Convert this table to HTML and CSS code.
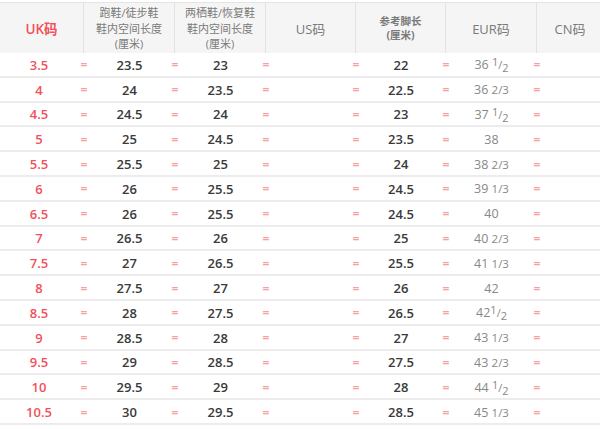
FILE: index.html
```html
<!DOCTYPE html>
<html lang="zh-CN">
<head>
<meta charset="utf-8">
<title>尺码对照表</title>
<link rel="stylesheet" href="styles.css">
</head>
<body>
<div class="sheet">
  <div class="head">
    <div class="hc uk">UK码</div>
    <div class="hc small">跑鞋/徒步鞋<br>鞋内空间长度<br>(厘米)</div>
    <div class="hc small">两栖鞋/恢复鞋<br>鞋内空间长度<br>(厘米)</div>
    <div class="hc">US码</div>
    <div class="hc tiny">参考脚长<br>(厘米)</div>
    <div class="hc">EUR码</div>
    <div class="hc last">CN码</div>
  </div>
  <div class="body">
    <div class="row"><span class="uk">3.5</span><span class="eq">=</span><span class="v">23.5</span><span class="eq">=</span><span class="v">23</span><span class="eq">=</span><span></span><span class="eq">=</span><span class="v">22</span><span class="eq">=</span><span class="eur">36 <span class="fr"><sup>1</sup>/<sub>2</sub></span></span><span class="eq">=</span><span></span></div>
    <div class="row"><span class="uk">4</span><span class="eq">=</span><span class="v">24</span><span class="eq">=</span><span class="v">23.5</span><span class="eq">=</span><span></span><span class="eq">=</span><span class="v">22.5</span><span class="eq">=</span><span class="eur">36 <span class="th">2/3</span></span><span class="eq">=</span><span></span></div>
    <div class="row"><span class="uk">4.5</span><span class="eq">=</span><span class="v">24.5</span><span class="eq">=</span><span class="v">24</span><span class="eq">=</span><span></span><span class="eq">=</span><span class="v">23</span><span class="eq">=</span><span class="eur">37 <span class="fr"><sup>1</sup>/<sub>2</sub></span></span><span class="eq">=</span><span></span></div>
    <div class="row"><span class="uk">5</span><span class="eq">=</span><span class="v">25</span><span class="eq">=</span><span class="v">24.5</span><span class="eq">=</span><span></span><span class="eq">=</span><span class="v">23.5</span><span class="eq">=</span><span class="eur">38</span><span class="eq">=</span><span></span></div>
    <div class="row"><span class="uk">5.5</span><span class="eq">=</span><span class="v">25.5</span><span class="eq">=</span><span class="v">25</span><span class="eq">=</span><span></span><span class="eq">=</span><span class="v">24</span><span class="eq">=</span><span class="eur">38 <span class="th">2/3</span></span><span class="eq">=</span><span></span></div>
    <div class="row"><span class="uk">6</span><span class="eq">=</span><span class="v">26</span><span class="eq">=</span><span class="v">25.5</span><span class="eq">=</span><span></span><span class="eq">=</span><span class="v">24.5</span><span class="eq">=</span><span class="eur">39 <span class="th">1/3</span></span><span class="eq">=</span><span></span></div>
    <div class="row"><span class="uk">6.5</span><span class="eq">=</span><span class="v">26</span><span class="eq">=</span><span class="v">25.5</span><span class="eq">=</span><span></span><span class="eq">=</span><span class="v">24.5</span><span class="eq">=</span><span class="eur">40</span><span class="eq">=</span><span></span></div>
    <div class="row"><span class="uk">7</span><span class="eq">=</span><span class="v">26.5</span><span class="eq">=</span><span class="v">26</span><span class="eq">=</span><span></span><span class="eq">=</span><span class="v">25</span><span class="eq">=</span><span class="eur">40 <span class="th">2/3</span></span><span class="eq">=</span><span></span></div>
    <div class="row"><span class="uk">7.5</span><span class="eq">=</span><span class="v">27</span><span class="eq">=</span><span class="v">26.5</span><span class="eq">=</span><span></span><span class="eq">=</span><span class="v">25.5</span><span class="eq">=</span><span class="eur">41 <span class="th">1/3</span></span><span class="eq">=</span><span></span></div>
    <div class="row"><span class="uk">8</span><span class="eq">=</span><span class="v">27.5</span><span class="eq">=</span><span class="v">27</span><span class="eq">=</span><span></span><span class="eq">=</span><span class="v">26</span><span class="eq">=</span><span class="eur">42</span><span class="eq">=</span><span></span></div>
    <div class="row"><span class="uk">8.5</span><span class="eq">=</span><span class="v">28</span><span class="eq">=</span><span class="v">27.5</span><span class="eq">=</span><span></span><span class="eq">=</span><span class="v">26.5</span><span class="eq">=</span><span class="eur">42<span class="fr"><sup>1</sup>/<sub>2</sub></span></span><span class="eq">=</span><span></span></div>
    <div class="row"><span class="uk">9</span><span class="eq">=</span><span class="v">28.5</span><span class="eq">=</span><span class="v">28</span><span class="eq">=</span><span></span><span class="eq">=</span><span class="v">27</span><span class="eq">=</span><span class="eur">43 <span class="th">1/3</span></span><span class="eq">=</span><span></span></div>
    <div class="row"><span class="uk">9.5</span><span class="eq">=</span><span class="v">29</span><span class="eq">=</span><span class="v">28.5</span><span class="eq">=</span><span></span><span class="eq">=</span><span class="v">27.5</span><span class="eq">=</span><span class="eur">43 <span class="th">2/3</span></span><span class="eq">=</span><span></span></div>
    <div class="row"><span class="uk">10</span><span class="eq">=</span><span class="v">29.5</span><span class="eq">=</span><span class="v">29</span><span class="eq">=</span><span></span><span class="eq">=</span><span class="v">28</span><span class="eq">=</span><span class="eur">44 <span class="fr"><sup>1</sup>/<sub>2</sub></span></span><span class="eq">=</span><span></span></div>
    <div class="row"><span class="uk">10.5</span><span class="eq">=</span><span class="v">30</span><span class="eq">=</span><span class="v">29.5</span><span class="eq">=</span><span></span><span class="eq">=</span><span class="v">28.5</span><span class="eq">=</span><span class="eur">45 <span class="th">1/3</span></span><span class="eq">=</span><span></span></div>
  </div>
</div>
</body>
</html>
```
FILE: styles.css
```css
html, body {
  margin: 0;
  padding: 0;
  background: #ffffff;
  overflow: hidden;
}
.sheet {
  width: 603px;
  padding-top: 2px;
  font-family: "Open Sans", "Noto Sans CJK SC", sans-serif;
}
.head {
  display: grid;
  grid-template-columns: 84px 91px 91px 90px 90px 91px 66px;
  height: 51px;
  border-top: 1px solid #e4e4e4;
  background: #f5f5f5;
  box-sizing: border-box;
}
.hc {
  border-right: 1px solid #e2e2e2;
  display: flex;
  align-items: center;
  justify-content: center;
  text-align: center;
  color: #7a7a7a;
  font-size: 13px;
  font-family: "Open Sans", "Noto Sans CJK SC", sans-serif;
}
.hc.last {
  border-right: none;
}
.hc.uk {
  color: #f2505a;
  font-size: 13.5px;
}
.hc.small {
  font-size: 11px;
  line-height: 15.5px;
  padding-top: 1px;
}
.hc.tiny {
  font-size: 10.5px;
  line-height: 14px;
  font-weight: 700;
  color: #7a7a7a;
}
.row {
  display: grid;
  grid-template-columns: 78px 12px 79px 12px 79px 12px 78px 12px 78px 12px 79px 12px 60px;
  height: 24.8px;
  box-sizing: border-box;
  border-bottom: 2px solid #ececec;
  align-items: center;
  padding-top: 1px;
}
.row > span {
  text-align: center;
  white-space: nowrap;
}
.uk {
  color: #f2505a;
  font-size: 13px;
  font-weight: 600;
}
.eq {
  color: #f6a0a6;
  font-size: 12px;
  font-weight: 700;
}
.v {
  color: #3a3a3a;
  font-size: 13px;
  font-weight: 600;
}
.eur {
  color: #888888;
  font-size: 12.5px;
}
.fr {
  font-size: 11px;
}
.fr sup {
  font-size: 11px;
  vertical-align: 3px;
  line-height: 0;
}
.fr sub {
  font-size: 11px;
  vertical-align: -3px;
  line-height: 0;
}
.th {
  font-size: 11.5px;
}
```
